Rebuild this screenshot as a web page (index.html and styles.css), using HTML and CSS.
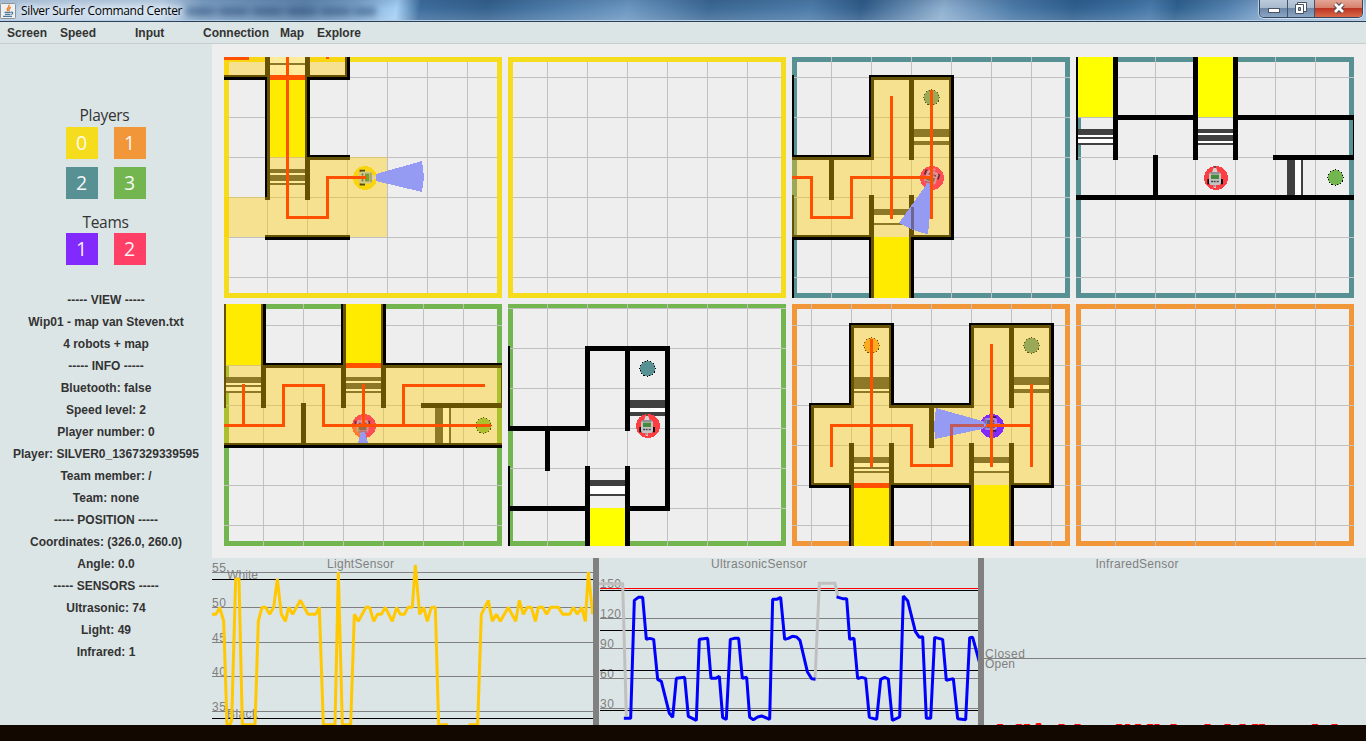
FILE: index.html
```html
<!DOCTYPE html>
<html lang="en">
<head>
<meta charset="utf-8">
<title>Silver Surfer Command Center</title>
<link rel="stylesheet" href="styles.css">
</head>
<body>
<svg class="defs" width="0" height="0" aria-hidden="true">
  <defs>
    <symbol id="robot" class="robot" viewBox="-36 -36 72 72">
      <path d="M-23 3h7v16h-7zM17 3h7v16h-7z" fill="#111"/>
      <path d="M-9 -14L-6 -26L-2 -33L2 -33L5 -26L9 -14Z" fill="#d6d2d2"/>
      <path d="M-2 -35h4v5h-4z" fill="#222"/>
      <path d="M-15 -17h30l3 6v26l-4 6h-28l-4 -6v-26z" fill="#c4c4c4"/>
      <path d="M-14 -17h28v4h-28z" fill="#777"/>
      <path d="M-12 -10h24v13h-24z" fill="#438a3d"/>
      <path d="M-12 8h6v5h-6zM-4 8h6v5h-6zM5 8h6v5h-6z" fill="#444"/>
      <path d="M-4 21h7v9h-7z" fill="#ddc0c0"/><path d="M-2 21h3v5h-3z" fill="#777"/>
    </symbol>
  </defs>
</svg>

<div class="window">
  <header class="titlebar">
    <svg class="java" viewBox="0 0 16 16">
      <rect x=".5" y=".5" width="15" height="15" rx="1" fill="#eef0f2" stroke="#8b9299"/>
      <path d="M8.700 1.800C10.500 4 5.500 5 7.600 8.200M10.800 4.200C8.300 5.400 9.600 6.400 8.800 8.300" fill="none" stroke="#e9842c" stroke-width="1.500"/>
      <path d="M4.500 9.400h6.200M5 11.300h5.400M3 13.400h9M11 9.200c2.300-.4 2.200 2 .2 2.200" fill="none" stroke="#4d7898" stroke-width="1.200"/>
    </svg>
    <h1 class="title">Silver Surfer Command Center</h1>
    <span class="smudge"></span>
    <div class="controls">
      <span class="ctl"><svg viewBox="0 0 27 17"><rect x="8.500" y="8.500" width="11" height="4" fill="#fff" stroke="#4a5361"/></svg></span>
      <span class="ctl"><svg viewBox="0 0 26 17"><path d="M9.500 2.500h9v9h-9z" fill="#fff" stroke="#4a5361"/><path d="M7.500 4.500h8v9h-8z" fill="#fff" stroke="#4a5361"/><path d="M10.500 7.500h2v3h-2z" fill="#8fa5bb" stroke="#4a5361"/></svg></span>
      <span class="ctl close"><svg viewBox="0 0 47 17"><path d="M20 4l8 8M28 4l-8 8" stroke="#58484e" stroke-width="5"/><path d="M20 4l8 8M28 4l-8 8" stroke="#fff" stroke-width="2.800"/></svg></span>
    </div>
  </header>
  <nav class="menu">
    <span class="m-screen">Screen</span><span class="m-speed">Speed</span><span class="m-input">Input</span><span class="m-conn">Connection</span><span class="m-map">Map</span><span>Explore</span>
  </nav>

  <div class="body">
    <aside class="side">
      <h2 class="legend-title">Players</h2>
      <div class="swatches">
        <span class="sw p0">0</span><span class="sw p1">1</span><span class="sw p2">2</span><span class="sw p3">3</span>
      </div>
      <h2 class="legend-title teams">Teams</h2>
      <div class="swatches"><span class="sw t1">1</span><span class="sw t2">2</span></div>
      <div class="info">
        <p>----- VIEW -----</p><p>Wip01 - map van Steven.txt</p><p>4 robots + map</p>
        <p>----- INFO -----</p><p>Bluetooth: false</p><p>Speed level: 2</p><p>Player number: 0</p><p>Player: SILVER0_1367329339595</p><p>Team member: /</p><p>Team: none</p>
        <p>----- POSITION -----</p><p>Coordinates: (326.0, 260.0)</p><p>Angle: 0.0</p>
        <p>----- SENSORS -----</p><p>Ultrasonic: 74</p><p>Light: 49</p><p>Infrared: 1</p>
      </div>
    </aside>

    <main class="main">
      <section class="views">
        <!-- player 0 -->
        <svg class="view" viewBox="224 57 278 241">
          <rect class="frame c0" x="226.500" y="59.500" width="273" height="236"/>
          <path class="grid" d="M227.500 57V298M267.500 57V298M307.500 57V298M347.500 57V298M387.500 57V298M427.500 57V298M467.500 57V298M224 77.500H502M224 117.500H502M224 157.500H502M224 197.500H502M224 237.500H502M224 277.500H502"/>
          <rect class="frame c0" x="226.500" y="59.500" width="273" height="236"/>
          <path class="seesaw" d="M270 77h35v80h-35z"/>
          <path class="white" d="M270 57h35v18h-35zM270 169h35v16h-35z"/>
          <path class="bar" d="M270 63h35v2h-35zM270 169h35v4h-35zM270 175h35v6h-35zM270 183h35v2h-35z"/>
          <path class="wall" d="M267.500 57V200M307.500 57V200M224 77.500H270M305 77.500H350M347.500 57V80M305 157.500H350M265 237.500H350"/>
          <path class="seen" d="M224 57h123v20h-123zM267 77h40v80h-40zM267 157h120v80h-163v-40h43z"/>
          <circle cx="365" cy="178" r="12" fill="#f9d50f"/>
          <use href="#robot" x="-12" y="-12" width="24" height="24" transform="translate(366 177.500) rotate(90)" opacity=".7"/>
          <path class="stop" d="M270 75h35v5h-35z"/>
          <path class="track" d="M224 58H249M327.500 57V59M287.500 57V217.500H327.500V177.500H366"/>
          <path class="cone" d="M376 174L422 161L424 177L422 192L376 181Z"/>
        </svg>
        <svg class="view" viewBox="508 57 278 241">
          <path class="grid" d="M547.500 57V298M587.500 57V298M627.500 57V298M667.500 57V298M707.500 57V298M747.500 57V298M508 77.500H786M508 117.500H786M508 157.500H786M508 197.500H786M508 237.500H786M508 277.500H786"/>
          <rect class="frame c0" x="510.500" y="59.500" width="273" height="236"/>
        </svg>
        <!-- player 2 -->
        <svg class="view" viewBox="792 57 278 241">
          <rect class="frame c2" x="794.500" y="59.500" width="273" height="236"/>
          <path class="grid" d="M831.500 57V298M871.500 57V298M911.500 57V298M951.500 57V298M991.500 57V298M1031.500 57V298M792 77.500H1070M792 117.500H1070M792 157.500H1070M792 197.500H1070M792 237.500H1070M792 277.500H1070"/>
          <path class="seesaw" d="M874 237h35v61h-35z"/>
          <path class="white" d="M914 129h35v16h-35zM874 209h35v16h-35z"/>
          <path class="bar" d="M914 129h35v8h-35zM914 141h35v4h-35zM874 209h35v6h-35zM874 223h35v2h-35z"/>
          <path class="wall" d="M871.500 75V160M871.500 195V298M869 77.500H954M951.500 75V240M911.500 75V160M911.500 195V298M792 157.500H874M831.500 155V200M792 237.500H874M909 237.500H954M791.500 75V160M791.500 195V298"/>
          <circle class="goal f2" cx="931.500" cy="97.500" r="7.700"/>
          <path class="seen" d="M871 77h80v160h-40v61h-40v-61h-79v-80h79z"/>
          <circle cx="932" cy="178" r="12" fill="#ff4d55"/>
          <use href="#robot" x="-12" y="-12" width="24" height="24" transform="translate(931 178) rotate(200)" opacity=".6"/>
          <path class="track" d="M891.500 96V219M931.500 90V219M792 177.500H811.500V217.500H851.500V177.500H933"/>
          <path class="cone" d="M926 185L899 223L913 230L928 234.500L930 214V185L928 182Z"/>
          <path d="M911 207h3v23l-3-1z" fill="#6d6592"/>
        </svg>
        <svg class="view" viewBox="1076 57 278 241">
          <rect class="frame c2" x="1078.500" y="59.500" width="273" height="236"/>
          <path class="grid" d="M1115.500 57V298M1155.500 57V298M1195.500 57V298M1235.500 57V298M1275.500 57V298M1315.500 57V298M1076 77.500H1354M1076 117.500H1354M1076 157.500H1354M1076 197.500H1354M1076 237.500H1354M1076 277.500H1354"/>
          <path class="seesaw" d="M1078 57h35v60h-35zM1198 57h35v60h-35z"/>
          <path class="white" d="M1078 129h35v16h-35zM1198 129h35v16h-35zM1287 160h16v35h-16z"/>
          <path class="bar" d="M1078 129h35v6h-35zM1078 137h35v2h-35zM1078 143h35v2h-35zM1198 129h35v4h-35zM1198 135h35v6h-35zM1198 143h35v2h-35zM1287 160h8v35h-8zM1301 160h2v35h-2z"/>
          <path class="wall" d="M1075.500 57V160M1115.500 57V160M1195.500 57V160M1235.500 57V160M1113 117.500H1198M1233 117.500H1354M1155.500 155V200M1273 157.500H1354M1076 197.500H1354M1355.500 115V160"/>
          <circle class="goal f3" cx="1335.500" cy="177.500" r="7.700"/>
          <circle cx="1216" cy="178" r="12" fill="#ff3e43"/>
          <use href="#robot" x="1203" y="166" width="24" height="24"/>
        </svg>
        <!-- player 3 -->
        <svg class="view" viewBox="224 304 278 242">
          <rect class="frame c3" x="226.500" y="306.500" width="273" height="237"/>
          <path class="grid" d="M263.500 304V546M303.500 304V546M343.500 304V546M383.500 304V546M423.500 304V546M463.500 304V546M224 325.500H502M224 365.500H502M224 405.500H502M224 445.500H502M224 485.500H502M224 525.500H502"/>
          <path class="seesaw" d="M226 304h35v61h-35zM346 304h35v61h-35z"/>
          <path class="white" d="M226 377h35v16h-35zM346 377h35v16h-35zM435 408h16v35h-16z"/>
          <path class="bar" d="M226 377h35v6h-35zM226 385h35v2h-35zM226 391h35v2h-35zM346 377h35v4h-35zM346 383h35v6h-35zM346 391h35v2h-35zM435 408h8v35h-8zM449 408h2v35h-2z"/>
          <path class="wall" d="M223.500 304V408M263.500 304V408M343.500 304V408M383.500 304V408M261 365.500H346M381 365.500H502M303.500 403V448M421 405.500H502M224 445.500H502M503.500 363V408"/>
          <circle class="goal f3" cx="483.500" cy="425.500" r="7.700"/>
          <path class="seen" d="M224 304h39v61h80v-61h40v61h119v80h-278z"/>
          <circle cx="364" cy="426" r="12" fill="#ff4d55"/>
          <path d="M352 427a12 12 0 0 0 10 11l-3-11z" fill="#ff7a2c"/>
          <use href="#robot" x="-12" y="-12" width="24" height="24" transform="translate(362.500 427) rotate(180)" opacity=".55"/>
          <path class="stop" d="M346 363h35v5h-35z"/>
          <path class="track" d="M224 425.500H283.500V385.500H323.500V425.500H491M243.500 384V425M363.500 384V425M403.500 425V385.500H485"/>
          <path class="cone" d="M361 432h4l3 11h-10z"/>
        </svg>
        <svg class="view" viewBox="508 304 278 242">
          <rect class="frame c3" x="510.500" y="306.500" width="273" height="237"/>
          <path class="grid" d="M547.500 304V546M587.500 304V546M627.500 304V546M667.500 304V546M707.500 304V546M747.500 304V546M508 308.500H786M508 348.500H786M508 388.500H786M508 428.500H786M508 468.500H786M508 508.500H786"/>
          <path class="seesaw" d="M590 508h35v38h-35z"/>
          <path class="white" d="M630 400h35v16h-35zM590 480h35v16h-35z"/>
          <path class="bar" d="M630 400h35v8h-35zM630 412h35v4h-35zM590 480h35v6h-35zM590 494h35v2h-35z"/>
          <path class="wall" d="M585 348.500H670M587.500 346V431M587.500 466V546M627.500 346V431M627.500 466V546M667.500 346V511M508 428.500H590M547.500 426V471M508 508.500H590M625 508.500H670M507.500 346V431M507.500 466V546"/>
          <circle class="goal f2" cx="647.500" cy="368.500" r="7.700"/>
          <circle cx="648" cy="426" r="12" fill="#ff3e43"/>
          <use href="#robot" x="635" y="414" width="24" height="24"/>
        </svg>
        <!-- player 1 -->
        <svg class="view" viewBox="792 304 278 242">
          <rect class="frame c1" x="794.500" y="306.500" width="273" height="237"/>
          <path class="grid" d="M811.500 304V546M851.500 304V546M891.500 304V546M931.500 304V546M971.500 304V546M1011.500 304V546M1051.500 304V546M792 325.500H1070M792 365.500H1070M792 405.500H1070M792 445.500H1070M792 485.500H1070M792 525.500H1070"/>
          <path class="seesaw" d="M854 485h35v61h-35zM974 485h35v61h-35z"/>
          <path class="white" d="M854 377h35v16h-35zM1014 377h35v16h-35zM854 457h35v16h-35zM974 457h35v16h-35z"/>
          <path class="bar" d="M854 377h35v12h-35zM854 391h35v2h-35zM1014 377h35v8h-35zM1014 389h35v4h-35zM854 457h35v6h-35zM854 467h35v2h-35zM854 471h35v2h-35zM974 457h35v6h-35zM974 471h35v2h-35z"/>
          <path class="wall" d="M851.500 323V408M851.500 443V546M891.500 323V408M891.500 443V546M849 325.500H894M969 325.500H1054M809 405.500H854M889 405.500H974M811.500 403V488M809 485.500H854M889 485.500H974M1009 485.500H1054M931.500 403V448M971.500 323V408M971.500 443V546M1011.500 323V408M1011.500 443V546M1051.500 323V488"/>
          <circle class="goal f1" cx="871.500" cy="345.500" r="7.700"/>
          <circle class="goal f2" cx="1031.500" cy="345.500" r="7.700"/>
          <path class="seen" d="M851 325h40v80h80v-80h80v160h-40v61h-40v-61h-80v61h-40v-61h-40v-80h40z"/>
          <circle cx="992" cy="426" r="12" fill="#8229fd"/>
          <use href="#robot" x="-12" y="-12" width="24" height="24" transform="translate(990 424) rotate(270)" opacity=".6"/>
          <path class="stop" d="M854 483h35v5h-35z"/>
          <path class="track" d="M831.500 467V425.500H911.500V465.500H951.500V425.500H1033M871.500 339V467M1031.500 384V467M991.500 344V467"/>
          <path class="cone" d="M936 408L982 421L986 425L982 429L935 439L934 425Z"/>
          <path d="M951.500 436V425.500H984" fill="none" stroke="#c05a5c" stroke-width="3"/>
        </svg>
        <svg class="view" viewBox="1076 304 278 242">
          <rect class="frame c1" x="1078.500" y="306.500" width="273" height="237"/>
          <path class="grid" d="M1115.500 304V546M1155.500 304V546M1195.500 304V546M1235.500 304V546M1275.500 304V546M1315.500 304V546M1076 325.500H1354M1076 365.500H1354M1076 405.500H1354M1076 445.500H1354M1076 485.500H1354M1076 525.500H1354"/>
        </svg>
      </section>

      <section class="charts">
        <svg class="chart" viewBox="212 558 381 167">
          <g class="label">
            <text x="327" y="568" textLength="67">LightSensor</text>
            <text x="212" y="572" textLength="14">55</text><text x="212" y="607" textLength="14">50</text><text x="212" y="642" textLength="14">45</text><text x="212" y="676" textLength="14">40</text><text x="212" y="711" textLength="14">35</text>
            <text x="227" y="579" textLength="31">White</text><text x="227" y="718" textLength="31">Black</text>
          </g>
          <path class="gray" d="M212 572.500H593M212 607.500H593M212 642.500H593M212 676.500H593M212 711.500H593"/>
          <path class="black" d="M212 579.500H593M212 718.500H593"/>
          <g transform="translate(205 550) scale(.33333)">
            <path class="line gold" d="M21 193L33 193L44 172L56 213L66 524L75 524L80 510L92 87L102 87L112 524L150 524L160 213L171 172L182 172L194 193L206 172L217 87L229 193L241 214L251 172L263 193L286 151L309 193L332 193L343 172L355 524L390 524L400 66L412 524L437 524L448 193L460 214L483 172L494 172L506 214L517 193L529 193L541 172L562 214L575 172L586 193L598 193L609 172L622 172L631 45L644 193L656 172L667 214L679 172L691 172L701 524L729 524M790 524L818 524L829 193L850 151L862 214L874 193L886 214L910 172L932 214L943 151L955 193L967 172L979 172L991 214L1000 172L1013 172L1025 193L1037 172L1060 172L1073 193L1094 193L1105 172L1117 193L1130 172L1141 214L1150 66L1163 193"/>
          </g>
        </svg>
        <svg class="chart" viewBox="599 558 379 167">
          <g class="label">
            <text x="711" y="568" textLength="96">UltrasonicSensor</text>
            <text x="600" y="588" textLength="21">150</text><text x="600" y="618" textLength="21">120</text><text x="600" y="648" textLength="14">90</text><text x="600" y="678" textLength="14">60</text><text x="600" y="708" textLength="14">30</text>
          </g>
          <path class="gray" d="M600 618.500H978M600 648.500H978M600 678.500H978M600 708.500H978"/>
          <path class="black" d="M600 590.500H978M600 630.500H978M600 670.500H978M600 710.500H978"/>
          <path class="red" d="M600 588.500H978"/>
          <g transform="translate(590 550) scale(.33333)">
            <path class="line silver" d="M27 101L98 101L109 500M675 392L688 100L735 100L744 142"/>
            <path class="line blue" d="M106 505L122 505L133 151L145 142L158 142L169 268L179 265L191 268L203 388L214 394L238 490L248 502L259 385L284 382L295 499L319 511L328 268L353 265L363 385L377 385L388 379L398 503L409 508L421 268L433 265L446 265L457 385L470 382L479 502L490 509L503 501L515 498L539 508L548 148L560 148L572 142L584 268L595 265L607 259L620 261L630 271L652 365L665 386L672 387M744 142L758 146L770 146L779 268L792 265L803 386L815 382L827 385L838 502L860 508L872 388L884 382L895 387L907 511L929 501L940 138L953 152L976 244L988 262L998 260L1009 505L1022 505L1034 262L1058 268L1069 391L1090 386L1103 506L1127 509L1139 263L1148 262L1167 332"/>
          </g>
        </svg>
        <svg class="chart" viewBox="984 558 382 167">
          <g class="label">
            <text x="1095.500" y="568" textLength="83">InfraredSensor</text>
            <text x="985" y="658" textLength="40">Closed</text><text x="985" y="668" textLength="30">Open</text>
          </g>
          <path class="gray" d="M984 658.500H1366"/>
          <path class="bumps" d="M998 725.500h4M1017 725.500h4M1025 725.500h4M1037 724.500h3M1059.500 725.500h4M1075.500 725.500h4M1117 725.500h4M1126 725.500h3M1136 725.500h4M1148 725.500h4M1155.500 725.500h3M1171.500 725.500h4M1205.500 725.500h4M1225.500 725.500h4M1240.500 725.500h4M1253 725.500h4M1260 725.500h4M1313 725.500h4M1332.500 725.500h4"/>
        </svg>
      </section>
    </main>
  </div>
  <footer class="taskbar"></footer>
</div>
</body>
</html>
```
FILE: styles.css
```css
* { box-sizing: border-box; }
body { margin: 0; overflow: hidden; background: #eee; font: bold 12px "Liberation Sans", Arial, sans-serif; color: #333; }
.defs { position: absolute; }
.window { width: 1366px; height: 741px; display: flex; flex-direction: column; }

.titlebar {
  height: 22px; flex: none; display: flex; align-items: flex-start;
  border-bottom: 1px solid #2c4058; box-shadow: inset 0 -1px #b5cde4;
  background:
    linear-gradient(180deg, rgba(0,20,50,.1), rgba(255,255,255,0) 40%, rgba(255,255,255,.15)),
    linear-gradient(100deg, #b3c9e0 0, #bfd3e8 50px, #c3d8ec 160px, #7fa3c8 200px, #6288b0 300px, #7ba3cb 350px, #a5d0f5 392px, #3e6e9e 415px, #35628f 480px, #4b7aa8 540px, #6c97c1 620px, #3c6995 700px, #4d7caa 800px, #305c89 850px, #8fb0d0 930px, #4b7aa8 1000px, #30608f 1060px, #3d6f9f 1110px, #4a7bab 1135px, #30628f 1160px, #5482b0 1210px, #8fb3d6 1262px, #a9c6e2 1366px);
}
.java { width: 16px; height: 16px; margin: 3px 0 0; }
.title { margin: 2px 0 0 5px; font: 12px/17px "Open Sans", "Noto Sans", sans-serif; color: #000; letter-spacing: -.32px; white-space: nowrap; text-shadow: 0 0 6px #fff, 0 0 8px #fff; }
.smudge { width: 190px; height: 9px; margin: 7px 0 0 4px; background: repeating-linear-gradient(90deg, rgba(20,50,90,.4) 0 24px, rgba(20,50,90,.2) 30px 34px); filter: blur(3px); }
.controls { margin-left: auto; margin-right: 3px; display: flex; height: 18px; border: 1px solid #35475f; border-top: 0; border-radius: 0 0 5px 5px; overflow: hidden; box-shadow: 0 0 0 1px rgba(255,255,255,.5); }
.ctl { width: 28px; background: linear-gradient(#bccbdc 0, #a8bace 45%, #6d88a6 50%, #8aa6c4 100%); border-right: 1px solid #40546c; }
.ctl + .ctl { width: 27px; }
.ctl + .ctl.close { width: 47px; border-right: 0; background: linear-gradient(#e4a594 0, #d7806c 45%, #bd3522 50%, #d9694a 100%); }
.ctl svg { display: block; height: 17px; width: 100%; }

.menu { height: 22px; flex: none; display: flex; background: #dce5e5; padding-left: 7px; line-height: 22px; border-bottom: 1px solid #c8cccc; }
.menu span { white-space: nowrap; }
.m-screen { width: 53px; } .m-speed { width: 75px; } .m-input { width: 68px; } .m-conn { width: 77px; } .m-map { width: 37px; }

.body { display: flex; height: 681px; }
.side { width: 212px; background: #dce5e6; padding-top: 60px; text-align: center; }
.legend-title { margin: 0 3px 1px 0; font: 15.5px/22px "Open Sans", "Noto Sans", sans-serif; letter-spacing: -.3px; }
.teams { margin: 12px 1px 0 0; }
.swatches { display: grid; grid-template-columns: 32px 32px; gap: 8px 16px; justify-content: center; }
.sw { height: 32px; padding-right: 1px; font: 400 19.5px/32px "Open Sans", "Noto Sans", sans-serif; color: #fffffff0; }
.p0 { background: #f5dc1c; } .p1 { background: #f2963a; } .p2 { background: #579193; } .p3 { background: #73b64f; }
.t1 { background: #8229fd; } .t2 { background: #ff3f65; }
.info { margin-top: 24px; }
.info p { margin: 0; line-height: 22px; white-space: nowrap; }

.main { width: 1154px; }
.views { display: grid; grid-template-columns: repeat(4, 278px); grid-template-rows: 241px 242px; gap: 6px; padding: 13px 12px 12px; }
.view { display: block; width: 100%; height: 100%; shape-rendering: crispEdges; }
.robot { shape-rendering: geometricPrecision; }
.frame { fill: none; stroke-width: 5; }
.c0 { stroke: #f5dc1c; } .c1 { stroke: #f2963a; } .c2 { stroke: #579193; } .c3 { stroke: #73b64f; }
.f1 { fill: #f2963a; } .f2 { fill: #579193; } .f3 { fill: #73b64f; }
.grid { stroke: #c0c0c0; stroke-width: 1; fill: none; }
.seesaw { fill: #ff0; }
.white { fill: #fff; }
.bar { fill: #404040; }
.wall { stroke: #000; stroke-width: 5; fill: none; }
.goal { stroke: #000; stroke-width: 1; stroke-dasharray: 1 2; }
.seen { fill: rgba(255, 204, 0, .4); }
.track { stroke: #ff5000; stroke-width: 3; fill: none; }
.stop { fill: #ff5000; }
.cone { fill: #959af2; }

.charts { display: grid; grid-template-columns: 381px 379px 382px; gap: 6px; height: 167px; background: #dce5e6; background-image: linear-gradient(90deg, transparent 381px, #808080 381px 387px, transparent 387px 766px, #808080 766px 772px, transparent 772px); }
.chart { display: block; width: 100%; height: 167px; overflow: hidden; }
.label { font: 12px "Liberation Sans", Arial, sans-serif; fill: #808080; }
.gray { stroke: #808080; fill: none; } .black { stroke: #000; fill: none; } .red { stroke: #f00; fill: none; }
.line { fill: none; stroke-width: 9; }
.gold { stroke: #ffc800; stroke-linejoin: bevel; } .silver { stroke: #c0c0c0; } .blue { stroke: #00f; stroke-linejoin: bevel; stroke-linecap: square; }
.bumps { stroke: #f00; stroke-width: 3; stroke-linecap: round; fill: none; }
.taskbar { height: 16px; background: #120800; }
```
